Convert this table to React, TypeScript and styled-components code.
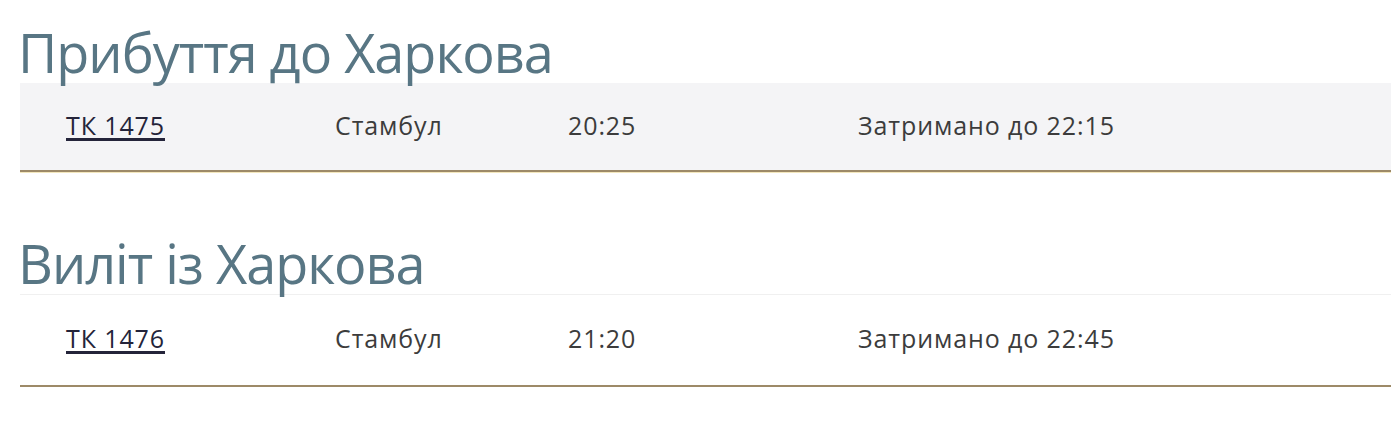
import React from 'react';
import styled, { createGlobalStyle } from 'styled-components';

const GlobalStyle = createGlobalStyle`
  html, body {
    margin: 0;
    padding: 0;
    background: #ffffff;
  }
`;

const Page = styled.div`
  padding: 0 0 0 20px;
  font-family: 'Open Sans', 'Noto Sans', sans-serif;
`;

const Section = styled.section<{ $top: number }>`
  padding-top: ${(p) => p.$top}px;
`;

const Heading = styled.h2`
  margin: 0 0 0 -2px;
  font-family: 'Open Sans', 'Noto Sans', sans-serif;
  font-weight: 400;
  font-size: 54px;
  line-height: 62px;
  color: #587684;
  letter-spacing: -1px;
`;

const FlightTable = styled.div<{ $shaded?: boolean }>`
  background: ${(p) => (p.$shaded ? '#f4f4f6' : '#ffffff')};
  border-top: 1px solid ${(p) => (p.$shaded ? '#f4f4f6' : '#f0f0f0')};
  border-bottom: 2px solid #9d8a68;
  box-shadow: 0 1px 0 #f3e7bd;
`;

const Row = styled.div<{ $height: number }>`
  box-sizing: border-box;
  display: grid;
  grid-template-columns: 269px 233px 290px 1fr;
  align-items: center;
  height: ${(p) => p.$height}px;
  padding: 0 0 4px 46px;
  font-family: 'Open Sans', 'Noto Sans', sans-serif;
  font-size: 25px;
  letter-spacing: 0.9px;
  color: #3c3c3c;
`;

const FlightLink = styled.a`
  color: #24243a;
  text-decoration: underline;
  text-decoration-thickness: 3px;
  text-underline-offset: 3px;
  cursor: pointer;
`;

const Cell = styled.span``;

type Flight = {
  number: string;
  city: string;
  time: string;
  status: string;
};

const arrivals: Flight[] = [
  { number: 'ТК 1475', city: 'Стамбул', time: '20:25', status: 'Затримано до 22:15' },
];

const departures: Flight[] = [
  { number: 'ТК 1476', city: 'Стамбул', time: '21:20', status: 'Затримано до 22:45' },
];

const FlightRows = ({ flights, height }: { flights: Flight[]; height: number }) => (
  <>
    {flights.map((f) => (
      <Row key={f.number} $height={height}>
        <Cell>
          <FlightLink>{f.number}</FlightLink>
        </Cell>
        <Cell>{f.city}</Cell>
        <Cell>{f.time}</Cell>
        <Cell>{f.status}</Cell>
      </Row>
    ))}
  </>
);

export default function App() {
  return (
    <Page>
      <GlobalStyle />
      <Section $top={21}>
        <Heading>Прибуття до Харкова</Heading>
        <FlightTable $shaded>
          <FlightRows flights={arrivals} height={86} />
        </FlightTable>
      </Section>
      <Section $top={60}>
        <Heading>Виліт із Харкова</Heading>
        <FlightTable>
          <FlightRows flights={departures} height={90} />
        </FlightTable>
      </Section>
    </Page>
  );
}
